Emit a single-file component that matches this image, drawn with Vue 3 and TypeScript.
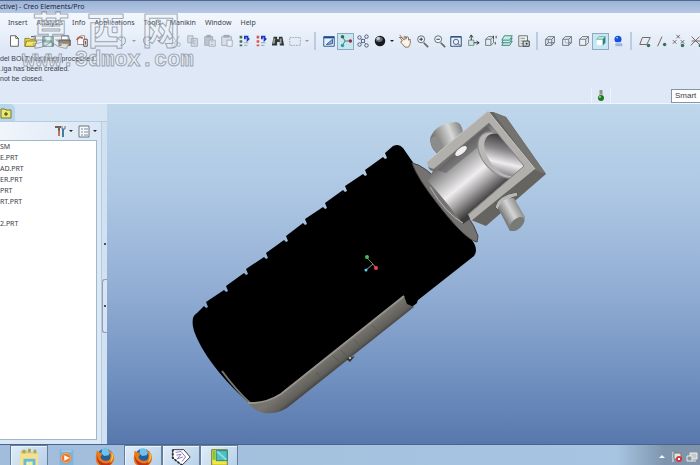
<script setup lang="ts">
import { ref } from 'vue'

interface Tool {
  label: string
  art: string
  active?: boolean
  menu?: boolean
}

const menus = ['Insert', 'Analysis', 'Info', 'Applications', 'Tools', 'Manikin', 'Window', 'Help']
const messages = ['del BOLT has been processed.', '.iga has been created.', 'not be closed.']
const parts = ['SM', 'E.PRT', 'AD.PRT', 'ER.PRT', 'PRT', 'RT.PRT', '', '2.PRT']
const filter = ref('Smart')

const cubeBack = '<path d="M3 6h7v7H3zM6 3h7v7h-3M3 6l3-3M10 6l3-3M10 13l3-3" fill="none" stroke="#626a74"/>'
const regen = (c: string) =>
  `<path d="M3 2h3v3H3zM3 7h3v3H3zM3 12h3v2H3z" fill="${c}"/><path d="M9 6V3h4M12 3v4l2-2" fill="none" stroke="#1739bd" stroke-width="2"/><path d="M8 10h5M8 13h4" stroke="#8a9bb4"/>`
const lens = (s: string) =>
  `<path d="M10 10l5 5" stroke="#666" stroke-width="2"/><circle cx="7" cy="6" r="4" fill="#eef7fb" stroke="#555c66"/><path d="${s}" stroke="#222"/>`
const page = '<path d="M2 2h6v8H2zM6 5h7v9H6z" fill="#d5dce6" stroke="#a4adba"/><path d="M8 8h3M8 11h3" stroke="#a4adba"/>'

const fileTools: Tool[] = [
  { label: 'New', art: '<path d="M4 2h6l3 3v9H4z" fill="#fff" stroke="#555"/><path d="M10 2v3h3" fill="none" stroke="#555"/>' },
  { label: 'Open', art: '<path d="M1 5h5l1 1h6v8H1z" fill="#e6d342" stroke="#887b26"/><path d="M3 8h12l-3 6H1z" fill="#f3e76b" stroke="#887b26"/><path d="M8 3h5v3" fill="none" stroke="#444"/>' },
  { label: 'Save', art: '<path d="M2 3h12v11H2z" fill="#78a9a3" stroke="#4c6e70"/><path d="M5 3h6v4H5zM4 10h8v4H4z" fill="#dceceb"/>' },
  { label: 'Print', art: '<path d="M4 2h8l1 5H4z" fill="#fff" stroke="#666"/><path d="M1 7h13v6H1z" fill="#928878" stroke="#4c4944"/><path d="M4 11h8v3H4z" fill="#ddd09c"/>' },
  { label: 'Check', art: '<path d="M3 4l4-2h4v10H3z" fill="#fff" stroke="#a27b7b"/><path d="M2 7q3-5 7-2" fill="none" stroke="#bd5c48" stroke-width="2"/><path d="M10 6h4v8h-4z" fill="#eee" stroke="#444"/><path d="M12 8v4" stroke="#c22"/>' },
]
const undoTools: Tool[] = [
  { label: 'Undo', menu: true, art: '<path d="M3 5q9-4 9 2t-6 6M3 5l4-3M3 5l4 3" fill="none" stroke="#8c949e"/>' },
  { label: 'Redo', menu: true, art: '<path d="M13 5Q4 1 4 7t6 6M13 5L9 2M13 5L9 8" fill="none" stroke="#8c949e"/>' },
]
const editTools: Tool[] = [
  { label: 'Cut', art: '<path d="M4 2l6 9M12 2L6 11" stroke="#a4adba"/><circle cx="5" cy="12" r="2" fill="none" stroke="#a4adba"/><circle cx="11" cy="12" r="2" fill="none" stroke="#a4adba"/>' },
  { label: 'Copy', art: page },
  { label: 'Paste', art: '<path d="M2 3h9v10H2z" fill="#bcc5d1" stroke="#a0a9b5"/><path d="M4 1h5v3H4z" fill="#a0a9b5"/><path d="M7 7h7v7H7z" fill="#e2e8f0" stroke="#a0a9b5"/><path d="M9 9h3M9 12h3" stroke="#a0a9b5"/>' },
  { label: 'Paste special', art: '<path d="M2 3h11v10H2z" fill="#d8dfe9" stroke="#a0a9b5"/><path d="M4 1h7v3H4z" fill="#a0a9b5"/><path d="M8 7h6v7H8z" fill="#eef2f8" stroke="#a0a9b5"/>' },
  { label: 'Regenerate', art: regen('#456c60') },
  { label: 'Regenerate manager', art: regen('#dc5548') },
  { label: 'Find', art: '<path d="M3 3h4v3h2V3h4l2 10h-5V9H7v4H1z" fill="#303438"/><path d="M4 5L3 11M11 5v6" stroke="#9ca58e" stroke-width="2"/>' },
  { label: 'Select', menu: true, art: '<path d="M2 4h12v9H2z" fill="none" stroke="#99a1ac" stroke-dasharray="2 1"/>' },
]
const viewTools: Tool[] = [
  { label: 'Repaint', art: '<path d="M2 3h12v11H2z" fill="#e5f0fb" stroke="#204a90"/><path d="M2 3h12v2H2z" fill="#204a90"/><path d="M5 12l7-6v5l-5 1z" fill="#88afd7" stroke="#31598d"/>' },
  { label: 'Spin center', active: true, art: '<path d="M4 3l3 5-3 5M7 8h6" fill="none" stroke="#486b62" stroke-width="1"/><circle cx="4" cy="3" r="2" fill="#28724a"/><circle cx="4" cy="13" r="2" fill="#35a291"/><circle cx="13" cy="8" r="2" fill="#9b2932"/>' },
  { label: 'Orient mode', art: '<path d="M5 5l6 6M11 5l-6 6" stroke="#626b89"/><g fill="#e5ebf4" stroke="#435472"><circle cx="4" cy="4" r="2"/><circle cx="12" cy="3" r="2"/><circle cx="8" cy="8" r="2"/><circle cx="4" cy="12" r="2"/><circle cx="12" cy="13" r="2"/></g>' },
  { label: 'Appearance', menu: true, art: '<circle cx="8" cy="8" r="6" fill="#15191d"/><ellipse cx="7" cy="6" rx="4" ry="3" fill="#647077"/><circle cx="6" cy="5" r="2" fill="#c3cacd"/>' },
]
const zoomTools: Tool[] = [
  { label: 'Pan', art: '<path d="M5 8L3 5l1-1 3 3V3h2v3l1-3 2 1v3l2-1v5l-2 4H8L3 9z" fill="#fff4e4" stroke="#756b61"/><path d="M2 1l3 4M1 4h4" stroke="#b35b35"/>' },
  { label: 'Zoom in', art: lens('M5 6h4M7 4v4') },
  { label: 'Zoom out', art: lens('M5 6h4') },
  { label: 'Refit', art: '<path d="M2 3h12v11H2z" fill="#e7f1fb" stroke="#1d396c"/><path d="M2 3h12v1H2z" fill="#1d396c"/><circle cx="8" cy="9" r="3" fill="none" stroke="#46566d"/><path d="M10 11l3 2" stroke="#46566d"/>' },
  { label: 'Reorient', art: '<path d="M3 7h6v6H3z" fill="#d1ebec" stroke="#6c8784"/><path d="M6 7V2M4 4l2-3 2 3M9 10h6M12 8l3 2-3 2" fill="none" stroke="#24292c"/>' },
  { label: 'Saved views', art: '<path d="M3 6h6v7H3zM3 6l3-3h6L9 6M9 13l3-3V3" fill="#e3edf1" stroke="#5f7174"/><path d="M12 2v3M15 2v3M14 9v3" stroke="#303638"/>' },
  { label: 'Layers', art: '<g fill="#c5eee6" stroke="#397b74"><path d="M5 8h9l-3 5H2z"/><path d="M5 5h9l-3 5H2z"/><path d="M5 2h9l-3 5H2z"/></g>' },
  { label: 'View manager', art: '<path d="M2 2h10v12H2z" fill="#eef0e6" stroke="#646c70"/><path d="M4 5h5M4 8h3M4 11h3" stroke="#858d8f"/><path d="M7 8h7v6H7z" fill="#ccd6dc" stroke="#333"/><circle cx="11" cy="11" r="1" fill="#222"/>' },
]
const displayTools: Tool[] = [
  { label: 'Wireframe', art: cubeBack + '<path d="M6 10h4M6 6v4l-3 3" fill="none" stroke="#626a74"/>' },
  { label: 'Hidden line', art: cubeBack + '<path d="M6 7v3h3" fill="none" stroke="#a9b0bb"/>' },
  { label: 'No hidden', art: '<path d="M3 6h7v7H3zM3 6l3-3h7l-3 3M10 13l3-3V3" fill="#eef1f7" stroke="#626a74"/>' },
  { label: 'Shading', active: true, art: '<path d="M3 6h7v7H3z" fill="#fff" stroke="#c7eef0"/><path d="M3 6l3-3h7l-3 3z" fill="#b6efe9" stroke="#74aaa4"/><path d="M10 6l3-3v7l-3 3z" fill="#2d827b"/>' },
  { label: 'Enhanced realism', art: '<path d="M5 9h8v5H5z" fill="#a2b5df"/><circle cx="8" cy="6" r="4" fill="#1752df"/><circle cx="7" cy="4" r="1" fill="#9bcaff"/><path d="M2 10h12" stroke="#f6faff"/>' },
]
const datumTools: Tool[] = [
  { label: 'Planes', art: '<path d="M2 12L5 4h9l-4 8z" fill="none" stroke="#6c5549"/><circle cx="12" cy="13" r="2" fill="#33725e"/>' },
  { label: 'Axes', art: '<path d="M3 14l5-11" stroke="#6c5549"/><circle cx="11" cy="12" r="2" fill="#33725e"/>' },
  { label: 'Points', art: '<path d="M5 1l4 4M9 1L5 5M1 7l4 4M5 7l-4 4M10 7l4 4M14 7l-4 4" stroke="#6c5549"/><circle cx="12" cy="13" r="2" fill="#33725e"/>' },
  { label: 'Coordinate systems', art: '<path d="M2 13L12 3M3 3l9 9M3 8h10" stroke="#6c5549"/><circle cx="13" cy="13" r="2" fill="#33725e"/>' },
]
const groups = [
  { id: 'file', tools: fileTools },
  { id: 'undo', tools: undoTools },
  { id: 'edit', tools: editTools },
  { id: 'view', tools: viewTools },
  { id: 'zoom', tools: zoomTools },
  { id: 'display', tools: displayTools },
  { id: 'datum', tools: datumTools },
]

const firefox =
  '<circle cx="12" cy="12" r="9" fill="#235e9f"/><path d="M9 3q5-2 9 3l-2 4-5 1-3-3z" fill="#6fc2ed"/><path d="M3 5q1 2 4 2l2 2-2 3q2 5 7 4 4 0 4-5 0-4-3-6 7 1 7 9-1 8-10 9Q1 22 2 12z" fill="#e97916"/><path d="M3 10q2 9 11 9 5-1 7-6-1 8-8 9Q3 22 3 10z" fill="#ba351d"/><path d="M19 6q5 8-2 13 3-6 2-13" fill="#f9c438"/>'
const apps = [
  { label: 'Explorer', open: true, art: '<path d="M3 5h7l1 2h10v16H3z" fill="#e1c56a"/><path d="M2 8h20v14H2z" fill="#f4e08d"/><path d="M5 4h3v4H5zM11 3h3v4h-3zM17 4h3v4h-3z" fill="#a4a75c"/><path d="M6 14h13v8H6z" fill="#64b8d8"/><path d="M9 17h7v5H9z" fill="#e3eeb0"/>' },
  { label: 'Media player', open: false, art: '<path d="M4 4h15v17H4z" fill="#79b6e2"/><path d="M6 5h11v1H6z" fill="#bfe6f9"/><circle cx="11" cy="13" r="6" fill="#ea772a"/><circle cx="11" cy="13" r="5" fill="none" stroke="#f9b17b"/><path d="M9 10l6 3-6 3z" fill="#fff"/>' },
  { label: 'Firefox', open: false, art: firefox },
  { label: 'Firefox window', open: true, art: firefox },
  { label: 'Drafting', open: true, art: '<path d="M3 4l12 0 7 8-9 9L3 13z" fill="#fff" stroke="#252831"/><path d="M6 7l6-1 5 6-4 5M7 10l5-1-4 5 6-2" fill="none" stroke="#8371bd"/><path d="M3 4v9l10 8" fill="none" stroke="#252831" stroke-width="2" stroke-dasharray="2 2"/>' },
  { label: 'Creo', open: true, art: '<path d="M4 4h17v17H4z" fill="#f0e83e" stroke="#6c7435"/><path d="M9 5h12v11H9z" fill="#4dbfc5" stroke="#247e83"/><path d="M10 6l10 9" stroke="#8be0df" stroke-width="2"/><path d="M5 5h3v10H5z" fill="#80c442"/>' },
]

// Upper grip edge: one notch for every rib between the collar and the heel.
const notches = Array.from({ length: 10 }, (_, i) => {
  const x = Math.round(386 - i * 19.9)
  const y = Math.round(157 + i * 16.6)
  return `L${x - 1} ${y - 4} l2 5 l-2 1 l-2 -2`
}).join(' ')
const gripPath = `M403 148 Q399 143 393 146 ${notches} L197 313 Q190 317 194 331 C205 360 229 385 250 404 L270 402 L404 297 L413 304 L474 256 Q478 251 474 243 L412 161 Z`
</script>

<template>
  <div class="window">
    <header class="title">ctive) - Creo Elements/Pro</header>

    <div class="top">
      <nav class="menubar">
        <button v-for="m in menus" :key="m" type="button">{{ m }}</button>
      </nav>
      <div class="toolbar">
        <div v-for="g in groups" :key="g.id" class="group" :class="g.id">
          <template v-for="t in g.tools" :key="t.label">
            <button type="button" class="tool" :class="{ active: t.active }" :aria-label="t.label">
              <svg viewBox="0 0 16 16" v-html="t.art"></svg>
            </button>
            <button v-if="t.menu" type="button" class="drop" :aria-label="t.label + ' options'"></button>
          </template>
        </div>
      </div>
      <div class="messages">
        <p v-for="m in messages" :key="m">{{ m }}</p>
      </div>
      <div class="status">
        <span class="light">
          <svg viewBox="0 0 10 14">
            <path d="M3 1h4v5H3z" fill="#b9beb7" />
            <path d="M4 2h2M4 4h2" stroke="#557055" />
            <circle cx="5" cy="9" r="3" fill="#207827" />
            <circle cx="4" cy="8" r="1" fill="#a0dc95" />
          </svg>
        </span>
        <select v-model="filter" aria-label="Selection filter">
          <option>Smart</option>
        </select>
      </div>
      <div class="watermark">
        <div class="cjk"><span>莫</span><span>西</span><span>网</span></div>
        <div class="site">www.3dmox.com</div>
      </div>
    </div>

    <main class="work">
      <aside class="navigator">
        <div class="tabs">
          <button type="button" class="tab" aria-label="Folder browser">
            <svg viewBox="0 0 12 12">
              <path d="M1 2h4l1 1h5v8H1z" fill="#ece96c" stroke="#76772d" />
              <path d="M6 5v4M4 7h4" stroke="#343a24" />
            </svg>
          </button>
        </div>
        <div class="tree-pane">
          <div class="tree-box">
            <div class="tree-tools">
              <button type="button" aria-label="Settings">
                <svg viewBox="0 0 12 14">
                  <path d="M1 3h6M3 2v2M5 4v8" stroke="#766154" stroke-width="2" />
                  <path d="M9 5v8" stroke="#417dab" stroke-width="2" />
                  <path d="M8 2v3h3V2" fill="none" stroke="#676d72" />
                  <path d="M5 7v5" stroke="#ca704e" stroke-width="2" />
                </svg>
                <i></i>
              </button>
              <button type="button" aria-label="Show">
                <svg viewBox="0 0 12 14">
                  <path d="M1 2h10v11H1z" fill="#f6f9fc" stroke="#6a747e" />
                  <path d="M3 5h2M3 8h2M3 11h2M6 5h4M6 8h4M6 11h4" stroke="#7c8c9b" />
                </svg>
                <i></i>
              </button>
            </div>
            <ul class="tree">
              <li v-for="(p, i) in parts" :key="i">{{ p }}</li>
            </ul>
          </div>
          <div class="sash">
            <span class="mark"></span>
            <button type="button" aria-label="Resize"><span class="mark"></span></button>
          </div>
        </div>
      </aside>

      <section class="viewport">
        <svg class="model" viewBox="107 104 593 340" preserveAspectRatio="xMidYMid slice" role="img" aria-label="Model">
          <defs>
            <linearGradient id="neck" gradientUnits="userSpaceOnUse" x1="436" y1="164" x2="474" y2="210">
              <stop offset="0" stop-color="#5d5c5d" />
              <stop offset=".25" stop-color="#a3a2a3" />
              <stop offset=".55" stop-color="#efedef" />
              <stop offset=".75" stop-color="#a4a2a3" />
              <stop offset="1" stop-color="#3c3b3c" />
            </linearGradient>
            <linearGradient id="bore" gradientUnits="userSpaceOnUse" x1="488" y1="139" x2="514" y2="174">
              <stop offset="0" stop-color="#2d2b2d" />
              <stop offset=".4" stop-color="#878587" />
              <stop offset=".7" stop-color="#eeecee" />
              <stop offset="1" stop-color="#77777a" />
            </linearGradient>
            <linearGradient id="pinA" gradientUnits="userSpaceOnUse" x1="431" y1="141" x2="464" y2="128">
              <stop offset="0" stop-color="#646563" />
              <stop offset=".3" stop-color="#9c9d9b" />
              <stop offset=".6" stop-color="#d7d8d7" />
              <stop offset="1" stop-color="#747673" />
            </linearGradient>
            <linearGradient id="pinB" gradientUnits="userSpaceOnUse" x1="500" y1="216" x2="521" y2="204">
              <stop offset="0" stop-color="#646563" />
              <stop offset=".5" stop-color="#d5d5d5" />
              <stop offset="1" stop-color="#767876" />
            </linearGradient>
            <linearGradient id="trim" gradientUnits="userSpaceOnUse" x1="338" y1="349" x2="349" y2="363">
              <stop offset="0" stop-color="#77746f" />
              <stop offset=".6" stop-color="#615f5a" />
              <stop offset="1" stop-color="#302f2d" />
            </linearGradient>
          </defs>
          <path :d="gripPath" fill="#000" />
          <path d="M404 294 L420 290 L417 303 L412 307 L404 304Z" fill="#000" />
          <path d="M222 371 Q236 390 250 403" fill="none" stroke="#77766f" stroke-width="2" />
          <path d="M248 403 Q265 404 281 394 L404 296 L407 304 L414 307 L292 404 Q280 415 264 413 Q254 411 248 403Z" fill="url(#trim)" />
          <path d="M248 403 Q265 404 281 394 L404 296" fill="none" stroke="#96938e" stroke-width="2" />
          <path d="M316 372l6 7M333 356l9 8M341 350l6 7M354 340l8 8M372 325l8 8" stroke="#595751" />
          <path d="M346 359l4 3 5-6z" fill="#353634" />
          <circle cx="350" cy="358" r="1" fill="#deded9" />

          <path d="M430 139 Q434 124 456 122 Q461 122 463 132 L440 155 Q431 151 430 139Z" fill="url(#pinA)" />
          <path d="M430 139 Q438 131 443 147 L439 154 Q431 150 430 139Z" fill="#8b8d8a" />
          <path d="M412 163 Q425 165 444 187 Q472 217 478 236 L477 242 Q466 240 440 207 Q417 178 412 163Z" fill="#747372" stroke="#464443" />
          <path d="M428 181 L438 160 L488 119 L524 166 L470 219 L463 224 Q445 200 428 181Z" fill="url(#neck)" />
          <path d="M430 187 Q446 214 463 223" fill="none" stroke="#b9b7b8" stroke-width="1" />
          <path d="M437 170 L487 126 L494 134 L446 173Z" fill="#555354" opacity=".45" />
          <ellipse cx="461" cy="151" rx="7" ry="3" transform="rotate(-38 461 151)" fill="#f0eff0" />
          <ellipse cx="500" cy="155" rx="27" ry="17" transform="rotate(48 500 155)" fill="#b9b7b6" stroke="#8b8988" />
          <ellipse cx="504" cy="155" rx="25" ry="15" transform="rotate(50 504 155)" fill="url(#bore)" />
          <path d="M487 112 L493 112 L506 117 L546 174 L486 226 L471 220 L533 169Z" fill="#666461" />
          <path d="M493 112 L506 117 L546 174 L535 170Z" fill="#757370" />
          <path d="M427 162 L488 111 L535 169 L471 221 L468 214 L524 166 L489 123 L434 169 L428 167Z" fill="#b2b0ad" />
          <path d="M427 162 L488 111 L535 169" fill="none" stroke="#c7c5c2" />
          <path d="M434 169 L489 123 L524 166 L469 214" fill="none" stroke="#817f7c" />
          <path d="M428 167l6 2 3-2-1 5-6-2z" fill="#706e6c" />
          <path d="M495 207 Q498 195 517 192 L518 196 Q506 198 498 210Z" fill="#b7b7b3" stroke="#575955" />
          <path d="M498 208 Q503 197 514 198 L525 217 Q523 229 510 231Z" fill="url(#pinB)" />
          <ellipse cx="517" cy="224" rx="9" ry="5" transform="rotate(-42 517 224)" fill="#787a77" />

          <path d="M367 258l6 6 3 4" fill="none" stroke="#6e8349" />
          <path d="M373 264l-7 6" stroke="#6baeb0" />
          <path d="M373 264l3 4" stroke="#b83a42" />
          <circle cx="367" cy="257" r="2" fill="#49bd54" />
          <circle cx="376" cy="268" r="2" fill="#e44351" />
          <circle cx="366" cy="270" r="1.5" fill="#54d5df" />
        </svg>
      </section>
    </main>

    <footer class="taskbar">
      <button v-for="a in apps" :key="a.label" type="button" :class="{ open: a.open }" :aria-label="a.label">
        <svg viewBox="0 0 24 24" v-html="a.art"></svg>
      </button>
      <div class="tray">
        <button type="button" aria-label="Hidden icons"><svg viewBox="0 0 12 12"><path d="M3 7l3-3 3 3z" fill="#f4f8fc" /></svg></button>
        <button type="button" aria-label="Action center">
          <svg viewBox="0 0 12 12">
            <path d="M2 1v10" stroke="#e9f0ed" />
            <path d="M3 2h7v6H3z" fill="#e1e7df" stroke="#6f7e7b" />
            <circle cx="8" cy="8" r="3" fill="#d8333a" />
            <path d="M7 7l2 2M9 7l-2 2" stroke="#fff" />
          </svg>
        </button>
        <button type="button" aria-label="Network">
          <svg viewBox="0 0 12 12">
            <path d="M4 2h7v6H4z" fill="#c5cbc8" stroke="#eef1ef" />
            <path d="M1 5h5v5H1z" fill="#8c9896" stroke="#e9eeec" />
            <path d="M6 10h4" stroke="#e9eeec" />
          </svg>
        </button>
      </div>
    </footer>
  </div>
</template>

<style>
body {
  margin: 0;
}
</style>

<style scoped>
.window {
  display: flex;
  flex-direction: column;
  min-height: 100vh;
  overflow: hidden;
  background: #dfe8f6;
  color: #3b414b;
  font: 7px/10px "Noto Sans", "Noto Sans CJK SC", sans-serif;
}
button {
  margin: 0;
  padding: 0;
  border: 0;
  background: none;
  color: inherit;
  font: inherit;
}
svg {
  display: block;
}
.title {
  height: 12px;
  border-top: 1px solid #536987;
  background: linear-gradient(#9bb3d8, #b5c8e3);
  color: #17243b;
  line-height: 11px;
}
.top {
  position: relative;
  display: flex;
  flex-direction: column;
  height: 90px;
  border-bottom: 1px solid #f0f6fc;
  background: linear-gradient(#f3f8fe, #eaf1fb 18px, #dfe8f6 36px, #dfe8f6);
}
.menubar {
  display: flex;
  align-items: center;
  gap: 9px;
  height: 18px;
  padding: 2px 8px 0;
  box-sizing: border-box;
}
.toolbar {
  display: flex;
  height: 18px;
  padding-top: 1px;
  overflow: hidden;
}
.group {
  display: flex;
  flex: none;
  align-items: center;
}
.file {
  padding-left: 5px;
}
.undo {
  padding: 0 4px 0 23px;
}
.view,
.display,
.datum {
  margin-left: 4px;
  border-left: 2px solid #bccbe0;
  padding-left: 4px;
}
.view {
  margin-left: 3px;
}
.display {
  padding-left: 3px;
}
.tool {
  display: grid;
  place-items: center;
  box-sizing: border-box;
  width: 17px;
  height: 17px;
}
.tool svg {
  width: 14px;
  height: 14px;
}
.tool.active {
  border: 1px solid #8fa9bf;
  background: #c6e6f4;
}
.drop {
  display: grid;
  place-items: center;
  width: 8px;
  height: 17px;
}
.undo .drop,
.edit .drop {
  opacity: 0.4;
}
.drop::after,
.tree-tools i {
  content: "";
  border: 2px solid transparent;
  border-top-color: #222;
  border-bottom: 0;
}
.messages {
  padding-top: 4px;
  font-family: "Liberation Sans", sans-serif;
}
.messages p {
  margin: 0;
}
.status {
  display: flex;
  justify-content: flex-end;
  align-items: center;
  gap: 60px;
  height: 15px;
  margin-top: auto;
}
.light {
  display: grid;
  place-items: center;
  width: 18px;
  height: 15px;
  border: solid #eef4fb;
  border-width: 0 1px;
}
.light svg {
  width: 10px;
  height: 14px;
}
.status select {
  appearance: none;
  box-sizing: border-box;
  width: 29px;
  height: 14px;
  margin: 0;
  border: 1px solid #8395aa;
  border-right: 0;
  border-radius: 0;
  padding: 0 3px;
  background: #fff;
  color: #3b414b;
  font: 8px/12px "Liberation Sans", sans-serif;
}
.watermark {
  position: absolute;
  top: -7px;
  left: 22px;
  color: rgba(240, 245, 250, 0.25);
  pointer-events: none;
  -webkit-text-stroke: 1px rgba(125, 133, 143, 0.7);
}
.cjk {
  display: flex;
  gap: 17px;
  padding-left: 10px;
  font: bold 38px/44px "Noto Sans CJK SC", sans-serif;
}
.site {
  font: bold 22px/22px "Liberation Mono", monospace;
  color: rgba(240, 245, 250, 0.5);
}
.work {
  display: flex;
  flex: 1;
}
.navigator {
  display: flex;
  flex: none;
  flex-direction: column;
  width: 107px;
  background: #dbe7f5;
}
.tabs {
  height: 17px;
  background: #d5e5f4;
  border-bottom: 1px solid #b9ccdf;
}
.tab {
  width: 15px;
  height: 17px;
  border-radius: 0 5px 0 0;
  background: #b7d5eb;
}
.tab svg {
  width: 12px;
  height: 12px;
}
.tree-pane {
  display: flex;
  flex: 1;
}
.tree-box {
  display: flex;
  flex: 1;
  flex-direction: column;
  padding: 0 4px 4px 0;
  border-right: 1px solid #b8cadb;
}
.tree-tools {
  display: flex;
  justify-content: flex-end;
  gap: 5px;
  height: 18px;
  background: linear-gradient(90deg, #f0f5fb, #dbe7f5);
}
.tree-tools button {
  display: flex;
  align-items: center;
  gap: 3px;
}
.tree-tools svg {
  width: 12px;
  height: 14px;
}
.tree {
  flex: 1;
  margin: 0;
  border: solid #9eb9cc;
  border-width: 1px 1px 1px 0;
  background: #fff;
  padding: 0;
  list-style: none;
}
.tree li {
  height: 11px;
  line-height: 11px;
}
.sash {
  display: flex;
  flex-direction: column;
  justify-content: center;
  gap: 34px;
  width: 5px;
  padding-top: 10px;
  background: #d0e1f2;
}
.sash button {
  display: grid;
  place-items: center;
  height: 54px;
  border: 1px solid #8b9fb7;
  border-right: 0;
  border-radius: 3px 0 0 3px;
  background: #d9e3f2;
}
.mark {
  width: 2px;
  height: 2px;
  margin: 0 auto;
  background: #40516a;
}
.viewport {
  position: relative;
  flex: 1;
  background: linear-gradient(#bfd7eb, #aec8e4 25%, #91add3 55%, #7191c1 80%, #5877ac);
}
.model {
  position: absolute;
  inset: 0;
  width: 100%;
  height: 100%;
}
.taskbar {
  display: flex;
  height: 20px;
  overflow: hidden;
  border-top: 1px solid #48658e;
  padding-left: 10px;
  background: linear-gradient(90deg, #a1bddb, #a7c5e2 88%, #7e94ad 95%, #8093a9);
}
.taskbar > button {
  display: flex;
  justify-content: center;
  box-sizing: border-box;
  width: 38px;
  height: 22px;
  border: 1px solid transparent;
  border-bottom: 0;
}
.taskbar > button.open {
  border-color: #647e9d;
  background: linear-gradient(135deg, #e0edf8, #b6cfe7);
  box-shadow: inset 1px 1px #eaf4fc;
}
.taskbar > button svg {
  flex: none;
  width: 22px;
  height: 22px;
}
.tray {
  display: flex;
  align-items: center;
  gap: 3px;
  margin-left: auto;
  padding: 4px 2px 0 0;
}
.tray svg {
  width: 12px;
  height: 12px;
}
</style>
